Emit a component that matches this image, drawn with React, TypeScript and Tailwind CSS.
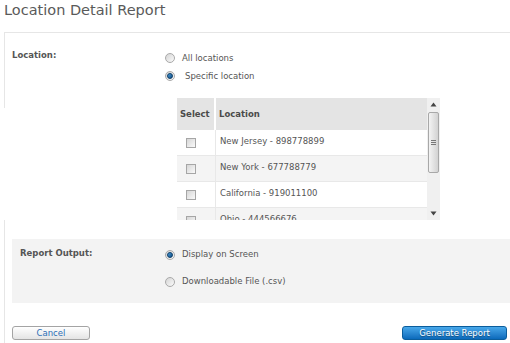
import React from "react";

const Radio = ({ checked }: { checked?: boolean }) => (
  <span className="relative inline-flex w-[10px] h-[10px] shrink-0 items-center justify-center rounded-full border border-[#a9a9a9] bg-gradient-to-br from-[#d4d4d4] to-[#fbfbfb]">
    {checked && (
      <span className="w-[6px] h-[6px] rounded-full bg-gradient-to-br from-[#4a9ad8] to-[#0d4f86] border border-[#0b3c66]" />
    )}
  </span>
);

const Checkbox = () => (
  <span className="inline-block w-[10px] h-[10px] border border-[#a6a6a6] bg-gradient-to-br from-[#d6d6d6] to-[#fafafa]" />
);

const rows = [
  "New Jersey - 898778899",
  "New York - 677788779",
  "California - 919011100",
  "Ohio - 444566676",
];

export default function App() {
  return (
    <div className="w-[510px] h-[343px] bg-white overflow-hidden text-[#555] font-['DejaVu_Sans',sans-serif]">
      <div className="h-[32px] pl-[4px] pt-[1px] text-[14.5px] leading-[18px] text-[#5a5a5a]">
        Location Detail Report
      </div>

      <div className="ml-[4px] border-t border-[#e6e6e6] flex h-[188px]">
        <div className="w-[161px] h-[75px] border-l border-[#e6e6e6] pl-[7px] pt-[17px] text-[8.5px] leading-[10px] font-bold text-[#555]">
          Location:
        </div>
        <div className="flex flex-col pt-[16px] text-[8.5px] text-[#555]">
          <div className="h-[18px] flex items-center gap-[7px]">
            <Radio />
            <span>All locations</span>
          </div>
          <div className="h-[18px] flex items-center gap-[7px]">
            <Radio checked />
            <span className="pl-[3px]">Specific location</span>
          </div>
          <div className="mt-[13px] ml-[12px] w-[263px] h-[122px] overflow-hidden flex">
            <div className="w-[250px] flex flex-col">
              <div className="h-[32px] shrink-0 flex bg-[#e4e4e4] font-bold text-[8.5px] text-[#4a4a4a]">
                <div className="w-[39px] border-r-2 border-white flex items-center pl-[3px]">Select</div>
                <div className="flex-1 flex items-center pl-[3px]">Location</div>
              </div>
              {rows.map((r, i) => (
                <div
                  key={r}
                  className={`h-[26px] shrink-0 flex border-b border-[#e8e8e8] ${i % 2 === 1 ? "bg-[#f4f4f4]" : "bg-white"}`}
                >
                  <div className="w-[39px] border-r border-[#e8e8e8] flex items-center pl-[9px]">
                    <Checkbox />
                  </div>
                  <div className="flex-1 flex items-center pl-[4px] pb-[2px] text-[8.5px] text-[#555]">{r}</div>
                </div>
              ))}
            </div>
            <div className="w-[13px] h-[122px] bg-[#f0f0f0] flex flex-col items-center">
              <div className="h-[13px] flex items-center justify-center">
                <svg width="7" height="5" viewBox="0 0 7 5"><path d="M3.5 0.5 L6.5 4.5 L0.5 4.5 Z" fill="#444" /></svg>
              </div>
              <div className="mt-[1px] w-[11px] h-[61px] rounded-[2px] border border-[#a8a8a8] bg-gradient-to-r from-[#f3f3f3] to-[#d2d2d2] flex flex-col items-center justify-center gap-[1px]">
                <span className="block w-[5px] h-[1px] bg-[#777]" />
                <span className="block w-[5px] h-[1px] bg-[#777]" />
                <span className="block w-[5px] h-[1px] bg-[#777]" />
              </div>
              <div className="flex-1" />
              <div className="h-[13px] flex items-center justify-center">
                <svg width="7" height="5" viewBox="0 0 7 5"><path d="M0.5 0.5 L6.5 0.5 L3.5 4.5 Z" fill="#444" /></svg>
              </div>
            </div>
          </div>
        </div>
      </div>

      <div className="ml-[4px] border-l border-[#e6e6e6] h-[123px] pl-[7px] pt-[19px] flex flex-col">
        <div className="h-[64px] bg-[#f3f3f3] flex">
          <div className="w-[153px] pl-[8px] pt-[9px] text-[8.5px] leading-[10px] font-bold text-[#555]">
            Report Output:
          </div>
          <div className="flex flex-col pt-[2px] text-[8.5px] text-[#555]">
            <div className="h-[27px] flex items-center gap-[7px]">
              <Radio checked />
              <span>Display on Screen</span>
            </div>
            <div className="h-[27px] flex items-center gap-[7px]">
              <Radio />
              <span>Downloadable File (.csv)</span>
            </div>
          </div>
        </div>
        <div className="mt-[23px] flex justify-between pr-[3px]">
          <button className="w-[78px] h-[14px] rounded-[3px] border border-[#a4a4a4] bg-gradient-to-b from-white to-[#e4e4e4] text-[8.5px] leading-[12px] text-[#2b6fb6] font-['DejaVu_Sans',sans-serif]">
            Cancel
          </button>
          <button className="w-[105px] h-[14px] rounded-[3px] border border-[#0b5d9c] bg-gradient-to-b from-[#47a8ea] to-[#0a6abb] text-[8.5px] leading-[12px] text-white [text-shadow:0_1px_1px_#134a75] font-['DejaVu_Sans',sans-serif]">
            Generate Report
          </button>
        </div>
      </div>
    </div>
  );
}
